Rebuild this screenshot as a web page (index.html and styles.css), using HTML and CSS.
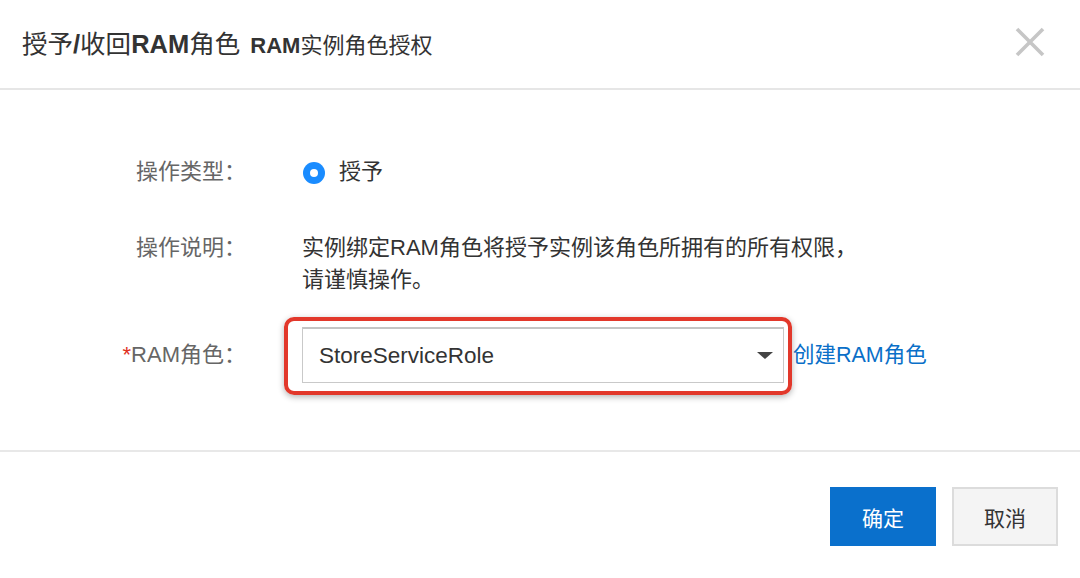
FILE: index.html
```html
<!DOCTYPE html>
<html lang="zh-CN">
  <head>
    <meta charset="UTF-8" />
    <meta name="viewport" content="width=device-width, initial-scale=1.0" />
    <title>授予/收回RAM角色</title>
    <link rel="stylesheet" href="styles.css">
  </head>
  <body>
    <div class="dialog">
      <div class="dialog-header">
        <h2 class="dialog-title">
          授予<b>/</b>收回<b>RAM</b>角色 <span class="dialog-subtitle"><b>RAM</b>实例角色授权</span>
        </h2>
        <button type="button" class="close" aria-label="关闭">
          <svg width="32" height="32" viewBox="0 0 32 32">
            <path d="M3 3 L29 29 M29 3 L3 29" stroke="#c6c6c6" stroke-width="3.6" fill="none" />
          </svg>
        </button>
      </div>

      <form class="dialog-body">
        <div class="row row-type">
          <span class="label">操作类型：</span>
          <label class="radio">
            <input type="radio" name="action" value="grant" checked />
            <span class="radio-dot"></span>
            授予
          </label>
        </div>

        <div class="row row-desc">
          <span class="label">操作说明：</span>
          <p class="desc">实例绑定RAM角色将授予实例该角色所拥有的所有权限，<br />请谨慎操作。</p>
        </div>

        <div class="row row-role">
          <span class="label"><i class="required">*</i>RAM角色：</span>
          <div class="select-wrap">
            <div class="select">
              <span>StoreServiceRole</span>
              <span class="caret"></span>
            </div>
            <span class="highlight"></span>
          </div>
          <a class="link" href="#">创建RAM角色</a>
        </div>
      </form>

      <div class="dialog-footer">
        <button type="button" class="btn btn-primary">确定</button>
        <button type="button" class="btn">取消</button>
      </div>
    </div>
  </body>
</html>
```

FILE: styles.css
```css
* {
  box-sizing: border-box;
}
body {
  margin: 0;
  background: #fff;
  font-family: "Liberation Sans", "Noto Sans CJK SC", sans-serif;
  color: #333;
}
.dialog {
  width: 1080px;
  height: 578px;
  display: flex;
  flex-direction: column;
}
.dialog-header {
  height: 90px;
  padding: 0 34px 0 22px;
  border-bottom: 2px solid #e6e6e6;
  display: flex;
  align-items: center;
  justify-content: space-between;
}
.dialog-title {
  margin: 0 0 5px;
  font-size: 25.5px;
  font-weight: 400;
  color: #333;
}
.dialog-title b {
  font-weight: 700;
}
.dialog-subtitle {
  font-size: 22px;
  margin-left: 3px;
}
.close {
  border: 0;
  background: none;
  padding: 0;
  width: 32px;
  height: 32px;
  margin-bottom: 4px;
  cursor: pointer;
}

.dialog-body {
  flex: 1;
  margin: 0;
  padding-top: 66px;
  font-size: 22px;
}
.row {
  display: flex;
  align-items: center;
  line-height: 32px;
}
.row-type {
  margin-bottom: 44px;
}
.row-desc {
  align-items: flex-start;
  margin-bottom: 31px;
}
.label {
  width: 246px;
  flex-shrink: 0;
  text-align: right;
  color: #666;
  margin-right: 56px;
}
.required {
  font-style: normal;
  color: #e0301e;
}
.desc {
  margin: 0;
  color: #333;
}

.radio {
  display: flex;
  align-items: center;
  gap: 14px;
  color: #333;
}
.radio input {
  display: none;
}
.radio-dot {
  width: 22px;
  height: 22px;
  border-radius: 50%;
  background: #1a8cff;
  position: relative;
  margin-left: 1px;
  margin-top: 2px;
}
.radio-dot::after {
  content: "";
  position: absolute;
  left: 7px;
  top: 7px;
  width: 8px;
  height: 8px;
  border-radius: 50%;
  background: #fff;
}

.select-wrap {
  position: relative;
}
.select {
  width: 482px;
  height: 56px;
  border: 1px solid #c9c9c9;
  border-top: 2px solid #c4c4c4;
  display: flex;
  align-items: center;
  justify-content: space-between;
  padding: 0 10px 0 16px;
  font-size: 22.5px;
  color: #333;
  background: #fff;
}
.caret {
  width: 0;
  height: 0;
  border-left: 8px solid transparent;
  border-right: 8px solid transparent;
  border-top: 7px solid #444;
}
/* red marker around the role picker */
.highlight {
  position: absolute;
  left: -18px;
  right: -8px;
  top: -10px;
  bottom: -12px;
  border: 4px solid #e2382b;
  border-radius: 10px;
  box-shadow: 0 2px 6px rgba(0, 0, 0, 0.3);
  pointer-events: none;
}
.link {
  margin-left: 9px;
  color: #0a6fc8;
  text-decoration: none;
  font-size: 21.5px;
}

.dialog-footer {
  height: 128px;
  border-top: 2px solid #e8e8e8;
  display: flex;
  justify-content: flex-end;
  align-items: flex-start;
  gap: 16px;
  padding: 35px 22px 0 0;
}
.btn {
  width: 106px;
  height: 59px;
  font-family: inherit;
  font-size: 21px;
  color: #333;
  background: #f4f4f4;
  border: 2px solid #dcdcdc;
  cursor: pointer;
}
.btn-primary {
  background: #0a70cc;
  border-color: #0a70cc;
  color: #fff;
}
```
